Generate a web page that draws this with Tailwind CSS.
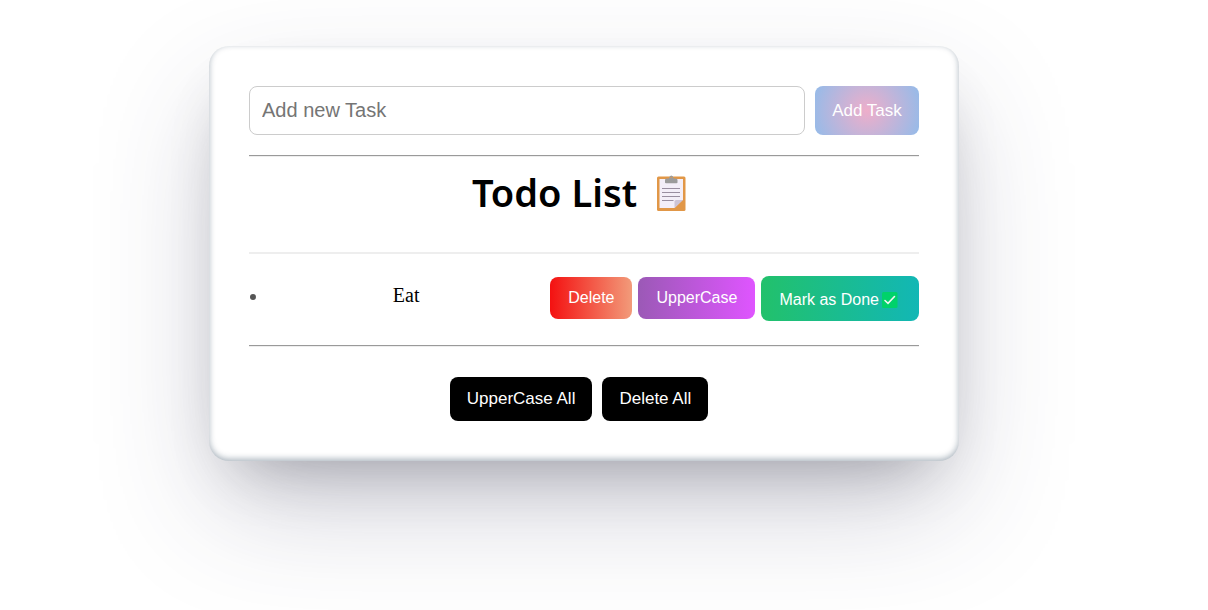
<!DOCTYPE html>
<html lang="en">

<head>
    <meta charset="UTF-8">
    <meta name="viewport" content="width=device-width, initial-scale=1.0">
    <title>Todo List</title>
    <script src="https://cdn.jsdelivr.net/npm/@tailwindcss/browser@4"></script>
</head>

<body class="bg-white min-h-screen overflow-x-hidden pl-4 pr-14 pt-[46px] font-['Liberation_Sans',Arial,sans-serif] text-base text-black">
    <main class="mx-auto max-w-[750px] rounded-[20px] bg-white p-10 shadow-[0_50px_120px_-10px_rgba(50,50,93,0.25),0_30px_60px_-30px_rgba(0,0,0,0.3),inset_0_-2px_6px_0_rgba(10,37,64,0.35)]">
        <form class="flex gap-2.5" onsubmit="addTask(event)">
            <input id="task" type="text" aria-label="Add new Task" placeholder="Add new Task"
                class="h-[49px] min-w-0 flex-1 rounded-lg border border-[#ccc] px-3 text-xl placeholder:text-[#757575]">
            <button type="submit" class="w-[104px] shrink-0 rounded-lg bg-[radial-gradient(circle,#eeaeca_0%,#94bbe9_100%)] text-[17px] text-white">Add Task</button>
        </form>

        <hr class="mt-5 h-0.5 border-t border-b border-t-[#9a9a9a] border-b-[#eee]">

        <h1 class="mt-[13px] flex h-11 items-center justify-center gap-5 pr-2.5 font-['Noto_Sans',sans-serif] text-[38px] font-semibold">
            <span>Todo List</span>
            <svg class="mt-0.5 h-9 w-[29px]" viewBox="0 0 29 36" aria-hidden="true">
                <rect x="0" y="1.500" width="28.500" height="34.500" rx="1.500" fill="#e19747" />
                <path d="M2.500 4h23.500v20.500l-8.500 8.500h-15z" fill="#f3eef8" />
                <path d="M17.500 33v-6.500q0-1.500 1.500-1.500h7z" fill="#cdc4d6" />
                <path d="M8 7.500V5q0-1.500 1.500-1.500h2.500q.5-3 2.300-3t2.300 3H19q1.500 0 1.500 1.500v2.500q0 .8-1 .8H9q-1 0-1-.8z" fill="#9b9b9b" />
                <circle cx="14.300" cy="2.500" r=".7" fill="#e19747" />
                <path d="M5 13.500h18M5 17.500h18M5 21.500h18M5 25.500h11.500" stroke="#998ea0" stroke-width="1.200" />
            </svg>
        </h1>

        <ul id="tasks" class="mt-[38px]">
            <li class="flex items-center gap-1.5 border-t-2 border-[#eee] pt-[22px] pb-6">
                <span class="mb-1 ml-px mr-1.5 size-1.5 shrink-0 rounded-full bg-[#555]"></span>
                <span class="flex-1 pb-2 text-center font-['Liberation_Serif',serif] text-xl">Eat</span>
                <button type="button" class="mb-0.5 h-[42px] rounded-lg bg-linear-to-r/srgb from-[#f41111] to-[#f29b7a] px-[18px] text-white">Delete</button>
                <button type="button" class="mb-0.5 h-[42px] rounded-lg bg-linear-to-r/srgb from-[#9b59b6] to-[#df55ff] px-[18px] text-white">UpperCase</button>
                <button type="button" class="flex h-[45px] items-center gap-[3px] rounded-lg bg-linear-to-r/srgb from-[#22c16b] to-[#12b7b5] pt-0.5 pl-[18px] pr-[21px] text-white">Mark as Done
                    <svg class="size-4" viewBox="0 0 16 16" aria-hidden="true">
                        <rect width="15.500" height="16" rx="1.500" fill="#00d26a" />
                        <path d="M3 8.500l3 2.800L12.500 4.500" fill="none" stroke="#f4f4f4" stroke-width="1.600" stroke-linecap="round" />
                    </svg>
                </button>
            </li>
        </ul>

        <hr class="h-0.5 border-t border-b border-t-[#9a9a9a] border-b-[#eee]">

        <div class="mt-[30px] flex justify-center gap-2.5 pr-2.5">
            <button type="button" class="h-11 rounded-lg bg-black px-[17px] text-[17px] text-white">UpperCase All</button>
            <button type="button" class="h-11 rounded-lg bg-black px-[17px] text-[17px] text-white">Delete All</button>
        </div>
    </main>
    <script>
        function addTask(event) {
            event.preventDefault();
            const input = document.getElementById('task');
            const name = input.value.trim();
            if (!name) return;

            const list = document.getElementById('tasks');
            const item = list.firstElementChild.cloneNode(true);
            item.children[1].textContent = name;
            list.appendChild(item);
            input.value = '';
        }
    </script>
</body>

</html>
